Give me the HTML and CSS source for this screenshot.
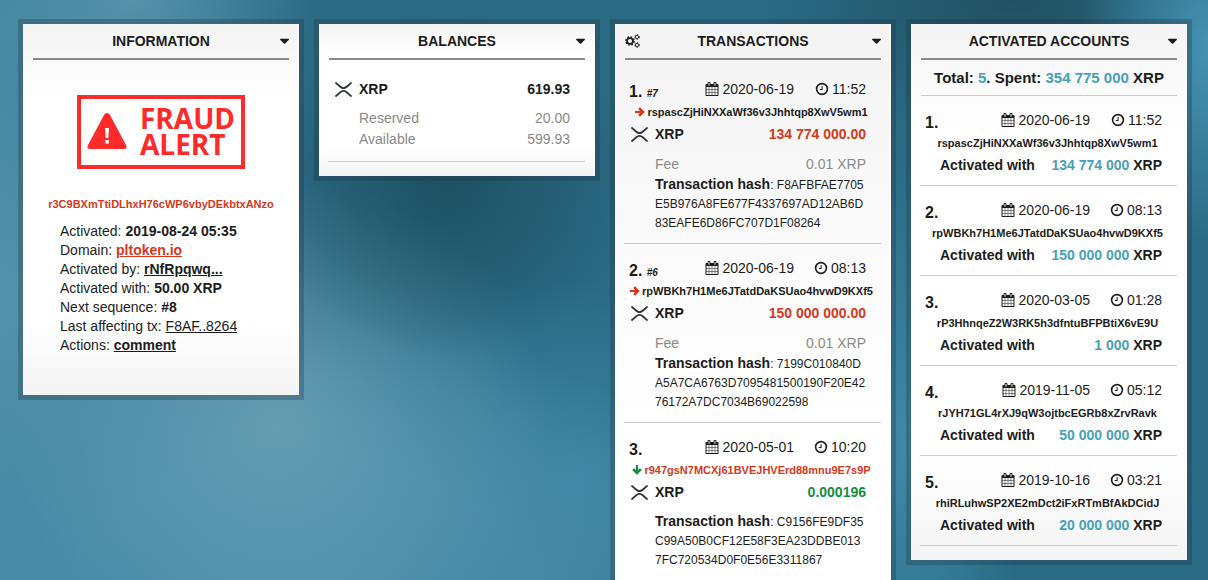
FILE: index.html
```
<!DOCTYPE html>
<html lang="en">

<head>
    <meta charset="utf-8">
    <title>XRP account</title>
    <link rel="stylesheet" href="styles.css">
</head>

<body>

    <!-- icons -->
    <svg class="sprite" aria-hidden="true">
        <symbol id="caret" viewBox="0 0 1024 1792"><path d="M1024 704q0 26-19 45l-448 448q-19 19-45 19t-45-19l-448-448q-19-19-19-45t19-45 45-19h896q26 0 45 19t19 45z"/></symbol>
        <symbol id="clock" viewBox="0 0 14 14"><circle cx="7" cy="7" r="5.4" fill="none" stroke="currentColor" stroke-width="1.6"/><path d="M7.6 4v4H4.8V7h1.8V4z"/></symbol>
        <symbol id="calendar" viewBox="0 0 1792 1792"><path d="M192 1664h288v-288h-288v288zm352 0h320v-288h-320v288zm-352-352h288v-320h-288v320zm352 0h320v-320h-320v320zm-352-384h288v-288h-288v288zm736 736h320v-288h-320v288zm-384-736h320v-288h-320v288zm768 736h288v-288h-288v288zm-384-352h320v-320h-320v320zm-352-864v-288q0-13-9.5-22.5t-22.5-9.5h-64q-13 0-22.5 9.5t-9.5 22.5v288q0 13 9.5 22.5t22.5 9.5h64q13 0 22.5-9.5t9.5-22.5zm736 864h288v-320h-288v320zm-384-384h320v-288h-320v288zm384 0h288v-288h-288v288zm32-480v-288q0-13-9.5-22.5t-22.5-9.5h-64q-13 0-22.5 9.5t-9.5 22.5v288q0 13 9.5 22.5t22.5 9.5h64q13 0 22.5-9.5t9.5-22.5zm384-64v1280q0 52-38 90t-90 38h-1408q-52 0-90-38t-38-90v-1280q0-52 38-90t90-38h128v-96q0-66 47-113t113-47h64q66 0 113 47t47 113v96h384v-96q0-66 47-113t113-47h64q66 0 113 47t47 113v96h128q52 0 90 38t38 90z"/></symbol>
        <symbol id="cogs" viewBox="0 0 30 28">
            <g fill="none" stroke="currentColor">
                <circle cx="10" cy="14" r="5.8" stroke-width="3.4"/>
                <circle cx="10" cy="14" r="8.2" stroke-width="3" stroke-dasharray="3.4 3.04"/>
                <circle cx="24" cy="6" r="3.2" stroke-width="1.8"/>
                <circle cx="24" cy="6" r="4.8" stroke-width="1.8" stroke-dasharray="2.6 2.43"/>
                <circle cx="24" cy="22" r="3.2" stroke-width="1.8"/>
                <circle cx="24" cy="22" r="4.8" stroke-width="1.8" stroke-dasharray="2.6 2.43"/>
            </g>
        </symbol>
        <symbol id="arrow" viewBox="0 0 10 10"><path d="M0 3.9h5L3.2 2 5 .2 9.8 5 5 9.8 3.2 8 5 6.1H0z"/></symbol>
        <symbol id="xrp" viewBox="0 0 16 14"><path d="M.4.4 5 4.4q3 2.6 6 0L15.6.4M.4 13.6 5 9.6q3-2.6 6 0l4.6 4" fill="none" stroke="#2b2f36" stroke-width="1.6"/></symbol>
    </svg>

    <div class="board">

        <section class="card">
            <header>
                <h2>INFORMATION</h2>
                <button class="toggle" aria-label="Toggle information"><svg><use href="#caret"/></svg></button>
            </header>
            <div class="fraud">
                <svg viewBox="0 0 40 36">
                    <path d="M20 0q2 0 3 2l16 30q2 4-2 4H3q-4 0-2-4L17 2q1-2 3-2z" fill="#ff2a2a"/>
                    <path d="M18 15h4l-.7 10h-2.6zM18.2 27h3.6v3.4h-3.6z" fill="#fff"/>
                </svg>
                <strong>FRAUD<br>ALERT</strong>
            </div>
            <div class="address account red">r3C9BXmTtiDLhxH76cWP6vbyDEkbtxANzo</div>
            <div class="facts">
                <div>Activated: <b>2019-08-24 05:35</b></div>
                <div>Domain: <a href="#" class="red"><b>pltoken.io</b></a></div>
                <div>Activated by: <a href="#"><b>rNfRpqwq...</b></a></div>
                <div>Activated with: <b>50.00 XRP</b></div>
                <div>Next sequence: <b>#8</b></div>
                <div>Last affecting tx: <a href="#">F8AF..8264</a></div>
                <div>Actions: <a href="#"><b>comment</b></a></div>
            </div>
        </section>

        <section class="card">
            <header>
                <h2>BALANCES</h2>
                <button class="toggle" aria-label="Toggle balances"><svg><use href="#caret"/></svg></button>
            </header>
            <div class="balance">
                <div class="amount"><svg><use href="#xrp"/></svg><b>XRP</b><b class="value">619.93</b></div>
                <div class="sub"><span>Reserved</span><span>20.00</span></div>
                <div class="sub"><span>Available</span><span>599.93</span></div>
            </div>
        </section>

        <section class="card transactions">
            <header>
                <button class="settings" aria-label="Settings"><svg><use href="#cogs"/></svg></button>
                <h2>TRANSACTIONS</h2>
                <button class="toggle" aria-label="Toggle transactions"><svg><use href="#caret"/></svg></button>
            </header>
            <div class="list">
                <div class="item">
                    <div class="when">
                        <b class="num">1. <i>#7</i></b>
                        <span><svg><use href="#calendar"/></svg>2020-06-19</span>
                        <span class="time"><svg><use href="#clock"/></svg>11:52</span>
                    </div>
                    <div class="address"><svg class="red"><use href="#arrow"/></svg>rspascZjHiNXXaWf36v3Jhhtqp8XwV5wm1</div>
                    <div class="amount"><svg><use href="#xrp"/></svg><b>XRP</b><b class="value red">134 774 000.00</b></div>
                    <div class="details">
                        <div class="sub fee"><span>Fee</span><span>0.01 XRP</span></div>
                        <div class="hash"><b>Transaction hash</b>: F8AFBFAE7705E5B976A8FE677F4337697AD12AB6D83EAFE6D86FC707D1F08264</div>
                    </div>
                </div>
                <div class="item">
                    <div class="when">
                        <b class="num">2. <i>#6</i></b>
                        <span><svg><use href="#calendar"/></svg>2020-06-19</span>
                        <span class="time"><svg><use href="#clock"/></svg>08:13</span>
                    </div>
                    <div class="address"><svg class="red"><use href="#arrow"/></svg>rpWBKh7H1Me6JTatdDaKSUao4hvwD9KXf5</div>
                    <div class="amount"><svg><use href="#xrp"/></svg><b>XRP</b><b class="value red">150 000 000.00</b></div>
                    <div class="details">
                        <div class="sub fee"><span>Fee</span><span>0.01 XRP</span></div>
                        <div class="hash"><b>Transaction hash</b>: 7199C010840DA5A7CA6763D7095481500190F20E4276172A7DC7034B69022598</div>
                    </div>
                </div>
                <div class="item">
                    <div class="when">
                        <b class="num">3.</b>
                        <span><svg><use href="#calendar"/></svg>2020-05-01</span>
                        <span class="time"><svg><use href="#clock"/></svg>10:20</span>
                    </div>
                    <div class="address red"><svg class="green down"><use href="#arrow"/></svg>r947gsN7MCXj61BVEJHVErd88mnu9E7s9P</div>
                    <div class="amount"><svg><use href="#xrp"/></svg><b>XRP</b><b class="value green">0.000196</b></div>
                    <div class="details">
                        <div class="hash"><b>Transaction hash</b>: C9156FE9DF35C99A50B0CF12E58F3EA23DDBE0137FC720534D0F0E56E3311867</div>
                    </div>
                </div>
            </div>
        </section>

        <section class="card">
            <header>
                <h2>ACTIVATED ACCOUNTS</h2>
                <button class="toggle" aria-label="Toggle activated accounts"><svg><use href="#caret"/></svg></button>
            </header>
            <div class="total">Total: <span class="blue">5</span>. Spent: <span class="blue">354 775 000</span> XRP</div>
            <div class="item">
                <div class="when">
                    <b class="num">1.</b>
                    <span><svg><use href="#calendar"/></svg>2020-06-19</span>
                    <span class="time"><svg><use href="#clock"/></svg>11:52</span>
                </div>
                <div class="address">rspascZjHiNXXaWf36v3Jhhtqp8XwV5wm1</div>
                <div class="with"><b>Activated with</b><b><span class="blue">134 774 000</span> XRP</b></div>
            </div>
            <div class="item">
                <div class="when">
                    <b class="num">2.</b>
                    <span><svg><use href="#calendar"/></svg>2020-06-19</span>
                    <span class="time"><svg><use href="#clock"/></svg>08:13</span>
                </div>
                <div class="address">rpWBKh7H1Me6JTatdDaKSUao4hvwD9KXf5</div>
                <div class="with"><b>Activated with</b><b><span class="blue">150 000 000</span> XRP</b></div>
            </div>
            <div class="item">
                <div class="when">
                    <b class="num">3.</b>
                    <span><svg><use href="#calendar"/></svg>2020-03-05</span>
                    <span class="time"><svg><use href="#clock"/></svg>01:28</span>
                </div>
                <div class="address">rP3HhnqeZ2W3RK5h3dfntuBFPBtiX6vE9U</div>
                <div class="with"><b>Activated with</b><b><span class="blue">1 000</span> XRP</b></div>
            </div>
            <div class="item">
                <div class="when">
                    <b class="num">4.</b>
                    <span><svg><use href="#calendar"/></svg>2019-11-05</span>
                    <span class="time"><svg><use href="#clock"/></svg>05:12</span>
                </div>
                <div class="address">rJYH71GL4rXJ9qW3ojtbcEGRb8xZrvRavk</div>
                <div class="with"><b>Activated with</b><b><span class="blue">50 000 000</span> XRP</b></div>
            </div>
            <div class="item">
                <div class="when">
                    <b class="num">5.</b>
                    <span><svg><use href="#calendar"/></svg>2019-10-16</span>
                    <span class="time"><svg><use href="#clock"/></svg>03:21</span>
                </div>
                <div class="address">rhiRLuhwSP2XE2mDct2iFxRTmBfAkDCidJ</div>
                <div class="with"><b>Activated with</b><b><span class="blue">20 000 000</span> XRP</b></div>
            </div>
        </section>

    </div>

</body>

</html>
```

FILE: styles.css
```
* {
    box-sizing: border-box;
}

body {
    margin: 0;
    min-height: 100vh;
    overflow: hidden;
    font-family: "Liberation Sans", Arial, sans-serif;
    font-size: 14px;
    line-height: 18px;
    color: #1c1c1c;
    background:
        radial-gradient(ellipse 180px 120px at 11% 0%, rgba(100, 155, 178, 0.7), transparent),
        radial-gradient(ellipse 190px 170px at 37% 31%, rgba(24, 72, 88, 0.75), transparent),
        radial-gradient(ellipse 270px 250px at 23% 71%, #659eb3, transparent),
        radial-gradient(ellipse 460px 280px at 25% 100%, #4c8eab, rgba(76, 142, 171, 0.8) 50%, transparent),
        radial-gradient(ellipse 240px 330px at 0% 50%, #5592a9, transparent),
        radial-gradient(ellipse 130px 200px at 100% 8%, #4592b2, transparent),
        radial-gradient(ellipse 250px 140px at 84% 0%, #215062, transparent),
        radial-gradient(ellipse 120px 300px at 75% 75%, #3f8aa8, transparent),
        radial-gradient(ellipse 240px 200px at 48% 80%, #3a84a2, transparent),
        linear-gradient(90deg, #3f859f 0%, #2b6a83 27%, #2b6a83 50%, #2a6a83 100%);
}

svg {
    fill: currentColor;
}

a {
    color: inherit;
}

.sprite {
    display: none;
}

.red {
    color: #d4391c;
}

.green {
    color: #158d3f;
}

.blue {
    color: #47a1b6;
}

.board {
    display: grid;
    grid-template-columns: repeat(4, 1fr);
    align-items: start;
    gap: 10px;
    padding: 19px 16px 0 18px;
}

/* cards */
.card {
    padding: 0 10px 14px;
    border: 5px solid rgba(30, 50, 65, 0.3);
    background: linear-gradient(#f4f4f4, #fff 20%, #fff 80%, #f4f4f4) padding-box;
}

.transactions {
    min-height: 100vh;
    background: linear-gradient(#f4f4f4, #fff 400px) padding-box;
}

.card header {
    display: grid;
    grid-template-columns: 1fr auto 1fr;
    align-items: center;
    height: 36px;
    border-bottom: 2px solid #8a8a8a;
}

.card h2 {
    grid-column: 2;
    margin: 0;
    font-size: 14px;
}

.card button {
    display: flex;
    padding: 0;
    border: 0;
    background: none;
    color: inherit;
    cursor: pointer;
}

.toggle {
    grid-column: 3;
    justify-self: end;
}

.toggle svg {
    width: 9px;
    height: 16px;
}

.settings svg {
    width: 15px;
    height: 14px;
}

/* information */
.fraud {
    display: flex;
    align-items: center;
    gap: 13px;
    width: 168px;
    height: 74px;
    margin: 35px auto 26px;
    padding: 0 0 3px 6px;
    border: 4px solid #ff2a2a;
    color: #ff2a2a;
    font-family: "Open Sans", sans-serif;
    font-size: 28px;
    line-height: 26px;
}

.fraud svg {
    flex: none;
    width: 40px;
    height: 36px;
}

.address {
    margin: 5px 2px 0 0;
    font-size: 11px;
    font-weight: bold;
    text-align: center;
    white-space: nowrap;
}

.address svg {
    width: 10px;
    height: 10px;
    margin-right: 2px;
    vertical-align: -1px;
}

.address .down {
    transform: rotate(90deg);
}

.account {
    margin: 0;
}

.facts {
    padding: 9px 0 26px 27px;
    line-height: 19px;
}

/* balances and rows */
.balance {
    margin-left: -1px;
    padding: 18px 0 11px;
    border-bottom: 1px solid #ccc;
}

.amount {
    display: flex;
    align-items: center;
    padding: 0 15px 0 7px;
    line-height: 22px;
}

.amount svg {
    width: 17px;
    height: 15px;
    margin-right: 7px;
}

.value {
    margin-left: auto;
}

.sub {
    display: flex;
    justify-content: space-between;
    padding: 0 15px 0 31px;
    line-height: 21px;
    color: #8a8a8a;
}

.balance .amount {
    margin-bottom: 8px;
}

.list {
    margin-top: 5px;
}

.item {
    margin-left: -1px;
    padding: 15px 0 10px;
    border-bottom: 1px solid #ccc;
}

.when {
    display: flex;
    height: 18px;
    padding: 0 15px 0 5px;
}

.when svg {
    width: 14px;
    height: 14px;
    margin-right: 3px;
    vertical-align: -2px;
}

.num {
    margin-right: auto;
    font-size: 16px;
    line-height: 24px;
}

.num i {
    font-size: 10px;
}

.time {
    width: 72px;
    text-align: right;
}

.item .amount {
    margin-top: 2px;
}

.details {
    margin-top: 10px;
}

.fee {
    margin-bottom: 3px;
    line-height: 18px;
}

.hash {
    padding: 0 15px 0 31px;
    font-size: 12px;
    line-height: 19px;
    word-break: break-all;
}

.hash b {
    font-size: 14px;
    line-height: 14px;
}

/* activated accounts */
.total {
    padding: 9px 0 8px;
    border-bottom: 1px solid #ccc;
    font-size: 15px;
    font-weight: bold;
    text-align: center;
}

.with {
    display: flex;
    justify-content: space-between;
    margin-top: 3px;
    padding: 0 15px 0 20px;
    line-height: 20px;
}
```
